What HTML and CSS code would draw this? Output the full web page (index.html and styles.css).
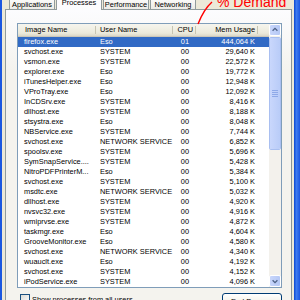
FILE: index.html
```html
<!DOCTYPE html>
<html lang="en">
<head>
  <meta charset="UTF-8" />
  <title>Windows Task Manager - Processes</title>
  <link rel="stylesheet" href="styles.css">
</head>
<body>
  <div class="window">
    <div class="frame-left"></div>
    <div class="client">
      <div class="tabs">
        <div class="tab">Applications</div>
        <div class="tab active">Processes</div>
        <div class="tab">Performance</div>
        <div class="tab">Networking</div>
      </div>

      <div class="panel">
        <div class="list">
          <div class="list-body">
            <div class="row head">
              <div class="c-name">Image Name</div>
              <div class="c-user">User Name</div>
              <div class="c-cpu">CPU</div>
              <div class="c-mem">Mem Usage</div>
              <div></div>
            </div>
            <div class="row selected"><div class="c-name">firefox.exe</div><div class="c-user">Eso</div><div class="c-cpu">01</div><div class="c-mem">444,064 K</div><div></div></div>
            <div class="row"><div class="c-name">svchost.exe</div><div class="c-user">SYSTEM</div><div class="c-cpu">00</div><div class="c-mem">29,640 K</div><div></div></div>
            <div class="row"><div class="c-name">vsmon.exe</div><div class="c-user">SYSTEM</div><div class="c-cpu">00</div><div class="c-mem">22,572 K</div><div></div></div>
            <div class="row"><div class="c-name">explorer.exe</div><div class="c-user">Eso</div><div class="c-cpu">00</div><div class="c-mem">19,772 K</div><div></div></div>
            <div class="row"><div class="c-name">iTunesHelper.exe</div><div class="c-user">Eso</div><div class="c-cpu">00</div><div class="c-mem">12,948 K</div><div></div></div>
            <div class="row"><div class="c-name">VProTray.exe</div><div class="c-user">Eso</div><div class="c-cpu">00</div><div class="c-mem">12,092 K</div><div></div></div>
            <div class="row"><div class="c-name">InCDSrv.exe</div><div class="c-user">SYSTEM</div><div class="c-cpu">00</div><div class="c-mem">8,416 K</div><div></div></div>
            <div class="row"><div class="c-name">dllhost.exe</div><div class="c-user">SYSTEM</div><div class="c-cpu">00</div><div class="c-mem">8,188 K</div><div></div></div>
            <div class="row"><div class="c-name">stsystra.exe</div><div class="c-user">Eso</div><div class="c-cpu">00</div><div class="c-mem">8,048 K</div><div></div></div>
            <div class="row"><div class="c-name">NBService.exe</div><div class="c-user">SYSTEM</div><div class="c-cpu">00</div><div class="c-mem">7,744 K</div><div></div></div>
            <div class="row"><div class="c-name">svchost.exe</div><div class="c-user">NETWORK SERVICE</div><div class="c-cpu">00</div><div class="c-mem">6,852 K</div><div></div></div>
            <div class="row"><div class="c-name">spoolsv.exe</div><div class="c-user">SYSTEM</div><div class="c-cpu">00</div><div class="c-mem">5,696 K</div><div></div></div>
            <div class="row"><div class="c-name">SymSnapService....</div><div class="c-user">SYSTEM</div><div class="c-cpu">00</div><div class="c-mem">5,428 K</div><div></div></div>
            <div class="row"><div class="c-name">NitroPDFPrinterM...</div><div class="c-user">Eso</div><div class="c-cpu">00</div><div class="c-mem">5,384 K</div><div></div></div>
            <div class="row"><div class="c-name">svchost.exe</div><div class="c-user">SYSTEM</div><div class="c-cpu">00</div><div class="c-mem">5,100 K</div><div></div></div>
            <div class="row"><div class="c-name">msdtc.exe</div><div class="c-user">NETWORK SERVICE</div><div class="c-cpu">00</div><div class="c-mem">5,032 K</div><div></div></div>
            <div class="row"><div class="c-name">dllhost.exe</div><div class="c-user">SYSTEM</div><div class="c-cpu">00</div><div class="c-mem">4,920 K</div><div></div></div>
            <div class="row"><div class="c-name">nvsvc32.exe</div><div class="c-user">SYSTEM</div><div class="c-cpu">00</div><div class="c-mem">4,916 K</div><div></div></div>
            <div class="row"><div class="c-name">wmiprvse.exe</div><div class="c-user">SYSTEM</div><div class="c-cpu">00</div><div class="c-mem">4,872 K</div><div></div></div>
            <div class="row"><div class="c-name">taskmgr.exe</div><div class="c-user">Eso</div><div class="c-cpu">00</div><div class="c-mem">4,604 K</div><div></div></div>
            <div class="row"><div class="c-name">GrooveMonitor.exe</div><div class="c-user">Eso</div><div class="c-cpu">00</div><div class="c-mem">4,580 K</div><div></div></div>
            <div class="row"><div class="c-name">svchost.exe</div><div class="c-user">NETWORK SERVICE</div><div class="c-cpu">00</div><div class="c-mem">4,340 K</div><div></div></div>
            <div class="row"><div class="c-name">wuauclt.exe</div><div class="c-user">Eso</div><div class="c-cpu">00</div><div class="c-mem">4,192 K</div><div></div></div>
            <div class="row"><div class="c-name">svchost.exe</div><div class="c-user">SYSTEM</div><div class="c-cpu">00</div><div class="c-mem">4,152 K</div><div></div></div>
            <div class="row"><div class="c-name">iPodService.exe</div><div class="c-user">SYSTEM</div><div class="c-cpu">00</div><div class="c-mem">4,096 K</div><div></div></div>
          </div>

          <div class="scroll">
            <div class="arrow">
              <svg width="10" height="10" viewBox="0 0 10 10"><polyline points="2,6 5,3 8,6" fill="none" stroke="#4d6185" stroke-width="1.6"/></svg>
            </div>
            <div class="thumb">
              <svg width="6" height="7" viewBox="0 0 6 7"><path d="M0 0.5h6M0 2.5h6M0 4.5h6M0 6.5h6" stroke="#8ea9e8" stroke-width="1"/></svg>
            </div>
            <div class="track"></div>
            <div class="arrow">
              <svg width="10" height="10" viewBox="0 0 10 10"><polyline points="2,4 5,7 8,4" fill="none" stroke="#4d6185" stroke-width="1.6"/></svg>
            </div>
          </div>
        </div>

        <div class="bottom">
          <label class="check"><span class="box"></span>Show processes from all users</label>
          <button class="end-btn">End Process</button>
        </div>
      </div>
    </div>
    <div class="frame-right"></div>

    <div class="note">% Demand</div>
    <svg class="note-line" width="300" height="30" viewBox="0 0 300 30">
      <path d="M212 2 Q204 9 198 24" fill="none" stroke="#ff0000" stroke-width="1.4"/>
    </svg>
  </div>
</body>
</html>
```

FILE: styles.css
```css
body {
  margin: 0;
  background: #ece9d8;
  font-family: "Liberation Sans", Arial, sans-serif;
  font-size: 7.4px;
  color: #000;
}
.window {
  position: relative;
  display: flex;
  height: 300px;
  overflow: hidden;
}
.frame-left {
  width: 2px;
  background: #1b57e0;
}
.frame-right {
  width: 6px;
  background: linear-gradient(to right, #0a47d0, #3d7bf0 40%, #1b57e0);
}
.client {
  flex: 1;
  padding-left: 3px;
}

/* tabs */
.tabs {
  display: flex;
  gap: 1px;
  height: 13px;
  margin: -4px 0 0 4px;
  position: relative;
  z-index: 1;
}
.tab {
  box-sizing: border-box;
  width: 46px;
  height: 13px;
  padding-top: 3px;
  line-height: 10px;
  text-align: center;
  white-space: nowrap;
  border: 1px solid #919b9c;
  border-bottom: none;
  border-radius: 3px 3px 0 0;
  background: linear-gradient(#ffffff, #ecebe6);
}
.tab.active {
  height: 14px;
  padding-top: 1px;
  background: #fcfcfe;
}

/* tab pane */
.panel {
  border: 1px solid #919b9c;
  border-right-color: #8a9394;
  margin-right: 2px;
  padding: 13px 9px 10px 11px;
  background: linear-gradient(#fcfcfe, #f4f3ee 60px);
}

/* list view */
.list {
  display: flex;
  border: 1px solid #7f9db9;
  background: #fff;
}
.list-body {
  flex: 1;
}
.row {
  display: grid;
  grid-template-columns: 78px 77px 23px 62px 1fr;
  height: 10px;
  line-height: 10px;
  white-space: nowrap;
}
.row > div {
  overflow: hidden;
}
.c-name { padding-left: 6px; }
.c-user { padding-left: 4px; }
.c-cpu { text-align: right; padding-right: 7px; }
.c-mem { text-align: right; padding-right: 3px; }

.row.selected {
  background: #316ac5;
  color: #fff;
}

.row.head {
  height: 13px;
  line-height: 12px;
  background: linear-gradient(#f6f5ee, #ebeadb 70%, #d6d2c2);
  box-shadow: inset 0 -1px #cbc7b8;
}
.row.head > div {
  background: linear-gradient(#c7c5b2, #c7c5b2) right 2px / 1px 8px no-repeat;
}
.row.head > div:last-child {
  background: none;
}
.row.head .c-name { padding-left: 7px; }
.row.head .c-cpu { padding-right: 3px; }

/* scrollbar */
.scroll {
  width: 12px;
  display: flex;
  flex-direction: column;
  background: #f3f1ec;
}
.arrow {
  box-sizing: border-box;
  height: 12px;
  border: 1px solid #fff;
  border-radius: 2px;
  background: linear-gradient(to right, #c8d6fb, #b5c8f5);
  display: flex;
  align-items: center;
  justify-content: center;
}
.arrow svg {
  width: 8px;
  height: 8px;
}
.thumb {
  box-sizing: border-box;
  height: 113px;
  margin-top: 1px;
  border: 1px solid #fff;
  border-radius: 2px;
  outline: 1px solid #a9bff0;
  outline-offset: -1px;
  background: linear-gradient(to right, #c9d7fc, #b9ccf8);
  display: flex;
  align-items: center;
  justify-content: center;
}
.track {
  flex: 1;
}

/* bottom row */
.bottom {
  display: flex;
  align-items: flex-start;
  margin-top: 5px;
}
.check {
  display: flex;
  align-items: flex-start;
  gap: 2px;
  margin: 1px 0 0 3px;
  line-height: 11px;
}
.box {
  box-sizing: border-box;
  width: 10px;
  height: 10px;
  border: 1px solid #1c5180;
  background: linear-gradient(135deg, #dcdcd7, #fff);
}
.end-btn {
  margin-left: auto;
  width: 60px;
  height: 16px;
  padding: 0;
  font: inherit;
  border: 1px solid #003c74;
  border-radius: 3px;
  background: linear-gradient(#fff, #ece9d8);
}

/* red annotation */
.note {
  position: absolute;
  left: 217px;
  top: -5px;
  color: #ff0000;
  font-size: 14px;
  line-height: 14px;
  z-index: 2;
}
.note-line {
  position: absolute;
  left: 0;
  top: 0;
  z-index: 2;
}
```
